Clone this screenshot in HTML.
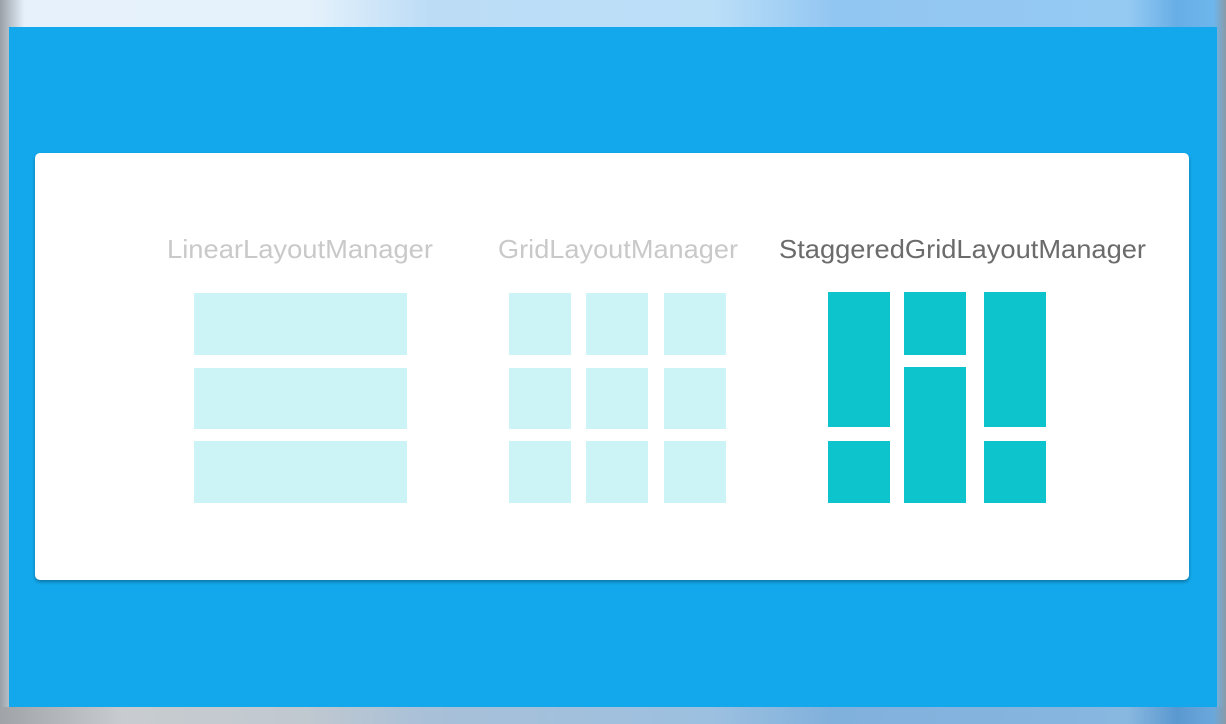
<!DOCTYPE html>
<html><head><meta charset="utf-8"><style>
html,body{margin:0;padding:0;}
body{width:1226px;height:724px;overflow:hidden;position:relative;
background:linear-gradient(90deg,#9aa0a8 0%,#e6f1fb 2%,#e6f2fb 25%,#bcdcf6 35%,#bcdff8 58%,#92c6f2 68%,#95caf3 92%,#67aee6 96%,#6db6ec 99%,#8a9aa8 100%);}
.bot{position:absolute;left:0;top:707px;width:1226px;height:17px;
background:linear-gradient(90deg,#a0a4a8 0%,#c8ccd0 10%,#c0c8d0 25%,#a8c0d8 35%,#9cc0e0 58%,#80b0dc 68%,#88b8e0 92%,#5a98d0 96%,#6aa8dc 99%,#8a9aa8 100%);}
.blue{position:absolute;left:9px;top:27px;width:1208px;height:680px;background:#12a8eb;}
.card{position:absolute;left:35px;top:153px;width:1154px;height:427px;background:#fff;border-radius:5px;box-shadow:0 2px 3px rgba(0,0,0,.3);}
svg{position:absolute;left:0;top:0;}
</style></head><body>
<div class="bot"></div>
<div class="blue"></div>
<div class="card"></div>
<svg width="1226" height="724">
<g font-family="Liberation Sans, sans-serif" font-size="26">
<text x="167" y="258" fill="#c9c9c9" textLength="266" lengthAdjust="spacingAndGlyphs">LinearLayoutManager</text>
<text x="498" y="258" fill="#c9c9c9" textLength="240" lengthAdjust="spacingAndGlyphs">GridLayoutManager</text>
<text x="779" y="258" fill="#6b6b6b" textLength="367" lengthAdjust="spacingAndGlyphs">StaggeredGridLayoutManager</text>
</g>
<g fill="#ccf3f6">
<rect x="194" y="293" width="213" height="62"/>
<rect x="194" y="368" width="213" height="61"/>
<rect x="194" y="441" width="213" height="62"/>
<rect x="509" y="293" width="62" height="62"/><rect x="586" y="293" width="62" height="62"/><rect x="664" y="293" width="62" height="62"/>
<rect x="509" y="368" width="62" height="61"/><rect x="586" y="368" width="62" height="61"/><rect x="664" y="368" width="62" height="61"/>
<rect x="509" y="441" width="62" height="62"/><rect x="586" y="441" width="62" height="62"/><rect x="664" y="441" width="62" height="62"/>
</g>
<g fill="#0ec4cc">
<rect x="828" y="292" width="62" height="135"/>
<rect x="828" y="441" width="62" height="62"/>
<rect x="904" y="292" width="62" height="63"/>
<rect x="904" y="367" width="62" height="136"/>
<rect x="984" y="292" width="62" height="135"/>
<rect x="984" y="441" width="62" height="62"/>
</g>
</svg>
</body></html>
